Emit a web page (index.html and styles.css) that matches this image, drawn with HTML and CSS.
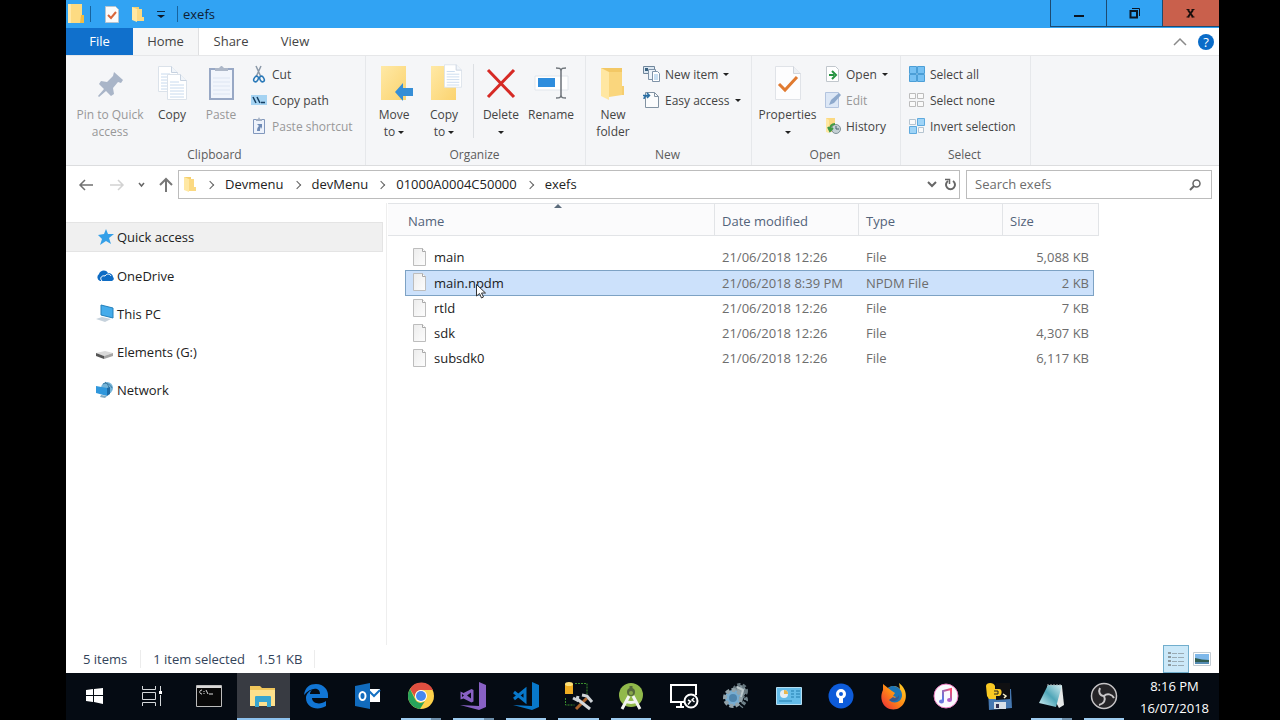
FILE: index.html
```html
<!DOCTYPE html>
<html lang="en">
<head>
    <meta charset="UTF-8">
    <meta name="viewport" content="width=device-width, initial-scale=1.0">
    <title>exefs</title>
    <link rel="stylesheet" href="styles.css">
</head>
<body>
    <svg class="defs" aria-hidden="true">
        <defs>
            <linearGradient id="gold" x1="0" y1="0" x2="1" y2="1"><stop offset="0" stop-color="#ffe9a6"/><stop offset="1" stop-color="#fbd36f"/></linearGradient>
            <linearGradient id="paper" x1="0" y1="0" x2="1" y2="1"><stop offset="0" stop-color="#ececec"/><stop offset="1" stop-color="#fdfdfd"/></linearGradient>
            <linearGradient id="fox" x1="1" y1="0" x2="0" y2="1"><stop offset="0" stop-color="#ffd928"/><stop offset="0.5" stop-color="#ff8a16"/><stop offset="1" stop-color="#e8253c"/></linearGradient>
            <linearGradient id="note" x1="1" y1="0" x2="0" y2="1"><stop offset="0" stop-color="#fc4a6c"/><stop offset="1" stop-color="#4c7df0"/></linearGradient>
            <linearGradient id="pad" x1="0" y1="1" x2="1" y2="0"><stop offset="0" stop-color="#d8f3f7"/><stop offset="0.5" stop-color="#4fa6b8"/><stop offset="1" stop-color="#d6eff3"/></linearGradient>
        </defs>
        <symbol id="folder" viewBox="0 0 14 17">
            <path d="M1 1h7v13H1z" fill="#f6cf6d"/>
            <path d="M1 1l5 2v13l-5-2z" fill="#ffe8a3"/>
            <path d="M6 3h5v8h2v4H6z" fill="#fbd982"/>
        </symbol>
        <symbol id="file" viewBox="0 0 15 18">
            <path d="M1.500.500h9l3 3v14h-12z" fill="url(#paper)" stroke="#bdbdbd"/>
            <path d="M10.500.500v3h3" fill="#fff" stroke="#a8a8a8"/>
        </symbol>
        <symbol id="page" viewBox="0 0 20 26">
            <path d="M.500.500h13l6 6v19H.500z" fill="#fff" stroke="#dbe2ea"/>
            <path d="M13.500.500v6h6" fill="#f1f5fa" stroke="#c7d2e0"/>
            <path d="M3 8h9M3 11h14M3 14h14M3 17h14M3 20h14M3 23h14" stroke="#c8daee"/>
        </symbol>
    </svg>

    <div class="desktop">
        <header class="titlebar">
            <svg class="app-icon" width="18" height="20" viewBox="0 0 18 20"><path d="M1 0h14v19H1z" fill="#fddb82"/><path d="M1 0h3v19H1z" fill="#ffe9a9"/><path d="M14 11h3v8h-4z" fill="#f1bd45"/></svg>
            <span class="divider"></span>
            <div class="quick-tools">
                <button aria-label="Properties"><svg width="14" height="17" viewBox="0 0 14 17"><path d="M.500.500h10l3 3v13H.500z" fill="#fbfbfb" stroke="#b9c5d0"/><path d="M3 9l3 3 5-6" fill="none" stroke="#d9663a" stroke-width="2"/></svg></button>
                <button aria-label="New folder"><svg width="14" height="17"><use href="#folder"/></svg></button>
                <button aria-label="Customize Quick Access Toolbar"><svg width="8" height="8" viewBox="0 0 8 8"><path d="M0 1.500h8" stroke="#0d2a47"/><path d="M0 5h8L4 8z" fill="#0d1726"/></svg></button>
            </div>
            <span class="divider"></span>
            <h1>exefs</h1>
            <div class="window-buttons">
                <button aria-label="Minimize"><svg width="12" height="12" viewBox="0 0 12 12"><path d="M1 9h10" stroke="#0b1522" stroke-width="2"/></svg></button>
                <button aria-label="Restore"><svg width="12" height="12" viewBox="0 0 12 12"><path d="M1.500 4h6.500v6.500H1.500z" fill="none" stroke="#0b1522" stroke-width="2"/><path d="M3 1.500h7.500V9" fill="none" stroke="#0b1522"/></svg></button>
                <button class="close" aria-label="Close"><svg width="12" height="12" viewBox="0 0 12 12"><path d="M3 3l5 7M8 3l-5 7" stroke="#1a0f0d" stroke-width="2"/><path d="M1.500 2.500h3M6.500 2.500h3M1.500 10h3M6.500 10h3" stroke="#1a0f0d"/></svg></button>
            </div>
        </header>

        <nav class="tabs">
            <button class="tab file">File</button>
            <button class="tab active">Home</button>
            <button class="tab">Share</button>
            <button class="tab">View</button>
            <div class="tab-tools">
                <button aria-label="Collapse ribbon"><svg width="14" height="9" viewBox="0 0 14 9"><path d="M1 8l6-6 6 6" fill="none" stroke="#8a8a8a" stroke-width="1.500"/></svg></button>
                <button class="help" aria-label="Help">?</button>
            </div>
        </nav>

        <section class="ribbon">
            <div class="group clipboard">
                <div class="group-body">
                    <button class="big pin" disabled>
                        <svg width="36" height="36" viewBox="0 0 36 36"><path d="M22 6l9 8-2 3-3-1-5 6 1 6-3 2-5-5-7 6-1-1 6-7-5-5 2-3 6 1 6-6z" fill="#a9b5c8"/></svg>
                        Pin to Quick<br>access
                    </button>
                    <button class="big copy">
                        <svg width="36" height="36" viewBox="0 0 36 36"><use href="#page" x="4" y="0" width="20" height="26"/><use href="#page" x="13" y="8" width="20" height="26"/></svg>
                        Copy
                    </button>
                    <button class="big paste" disabled>
                        <svg width="36" height="36" viewBox="0 0 36 36"><path d="M7 3h23v30H7z" fill="#f1f5fc" stroke="#98a8c5" stroke-width="2"/><path d="M10 12h17M10 16h17M10 20h17M10 24h17M10 28h17" stroke="#dde5f2"/><path d="M12 5V2h4l2-2h1l2 2h4v3z" fill="#aeb8c8"/></svg>
                        Paste
                    </button>
                    <div class="stack">
                        <button class="small">
                            <svg width="16" height="18" viewBox="0 0 16 18"><path d="M5 1l5 11M10 1L5 12" stroke="#8b99a8" stroke-width="1.500"/><ellipse cx="5" cy="14" rx="2" ry="3" transform="rotate(30 5 14)" fill="none" stroke="#2878b8" stroke-width="1.500"/><ellipse cx="11" cy="14" rx="2" ry="3" transform="rotate(-30 11 14)" fill="none" stroke="#2878b8" stroke-width="1.500"/></svg>
                            Cut
                        </button>
                        <button class="small">
                            <svg width="16" height="18" viewBox="0 0 16 18"><path d="M0 4h16v10H0z" fill="#a5d3f2"/><path d="M2 6l3 6M6 6l3 6M10 11.500h4" stroke="#153e62" stroke-width="1.500"/></svg>
                            Copy path
                        </button>
                        <button class="small" disabled>
                            <svg width="16" height="18" viewBox="0 0 16 18"><path d="M2.500 2.500h11v14h-11z" fill="#edf2fb" stroke="#8298bd"/><path d="M5 4V2h2l1-2 1 2h2v2z" fill="#a3b0c4"/><path d="M6 14c0-3 1-4 2-5L6 7h5v5l-1-2c-1 1-1 2-1 4z" fill="#6f8bb6"/></svg>
                            Paste shortcut
                        </button>
                    </div>
                </div>
                <h2>Clipboard</h2>
            </div>

            <div class="group organize">
                <div class="group-body">
                    <button class="big">
                        <svg width="36" height="36" viewBox="0 0 36 36"><path d="M5 0h25v34H5z" fill="url(#gold)"/><path d="M19 26l8-9v5h10v8H27v5z" fill="#368ed6"/></svg>
                        Move<br>to <span class="caret"></span>
                    </button>
                    <button class="big">
                        <svg width="36" height="36" viewBox="0 0 36 36"><path d="M5 0h25v34H5z" fill="url(#gold)"/><use href="#page" x="18" y="-2" width="18" height="24"/></svg>
                        Copy<br>to <span class="caret"></span>
                    </button>
                    <span class="rule"></span>
                    <button class="big delete">
                        <svg width="36" height="36" viewBox="0 0 36 36"><path d="M5 4l26 27M31 4L5 31" stroke="#d62a25" stroke-width="3"/></svg>
                        Delete<br><span class="caret"></span>
                    </button>
                    <button class="big">
                        <svg width="36" height="36" viewBox="0 0 36 36"><path d="M2 10h33v14H2z" fill="#fff" stroke="#e2e6eb"/><path d="M5 12h17v9H5z" fill="#2e8ddd"/><path d="M23 2c3 0 5 0 5 3 0-3 2-3 5-3M28 5v24M23 32c3 0 5 0 5-3 0 3 2 3 5 3" fill="none" stroke="#6d7379" stroke-width="1.500"/></svg>
                        Rename
                    </button>
                </div>
                <h2>Organize</h2>
            </div>

            <div class="group new">
                <div class="group-body">
                    <button class="big">
                        <svg width="36" height="36" viewBox="0 0 36 36"><path d="M6 2h21v27H6z" fill="#f3c865"/><path d="M27 20h2v9h-5z" fill="#f6ce70"/><path d="M6 2l8 4v28l-8-4z" fill="#ffe7a2"/><path d="M14 6h13v23l-13 2z" fill="#fad67d"/></svg>
                        New<br>folder
                    </button>
                    <div class="stack">
                        <button class="small">
                            <svg width="17" height="18" viewBox="0 0 17 18"><path d="M.500 1.500h11v7H.500z" fill="#dbe7f2" stroke="#70869b"/><path d="M2 3h3v3H2z" fill="#39617f"/><path d="M5.500 4.500h7v10h-7z" fill="#eef4fa" stroke="#7f93a8"/><path d="M9.500 6.500h5l2 2v8h-7z" fill="#fff" stroke="#7f93a8"/><path d="M11 10h4M11 12h4M11 14h4" stroke="#8fbce2"/></svg>
                            New item <span class="caret"></span>
                        </button>
                        <button class="small">
                            <svg width="17" height="18" viewBox="0 0 17 18"><path d="M2.500 1.500h9l4 4v11h-13z" fill="#fbfcfd" stroke="#8293a3"/><path d="M11.500 1.500v4h4" fill="none" stroke="#8293a3"/><path d="M0 4.500h6M1 8c0-2 1-3 4-3.500M4 2l2.500 2.500L4 7" fill="none" stroke="#2a6ea3" stroke-width="1.500"/></svg>
                            Easy access <span class="caret"></span>
                        </button>
                    </div>
                </div>
                <h2>New</h2>
            </div>

            <div class="group open">
                <div class="group-body">
                    <button class="big properties">
                        <svg width="36" height="36" viewBox="0 0 36 36"><path d="M5.500.500h18l7 7v26h-25z" fill="#fdfdfe" stroke="#e0e3e8"/><path d="M23.500.500v7h7" fill="#edf0f4" stroke="#d0d5dc"/><path d="M9 18l6 6 12-13" fill="none" stroke="#e07a30" stroke-width="3"/></svg>
                        Properties<br><span class="caret"></span>
                    </button>
                    <div class="stack">
                        <button class="small">
                            <svg width="16" height="18" viewBox="0 0 16 18"><path d="M1.500 1.500h9l3 3v12h-12z" fill="#fff" stroke="#c1c7cd"/><path d="M4 10h5M7 6l4 4-4 4" fill="none" stroke="#259340" stroke-width="2"/></svg>
                            Open <span class="caret"></span>
                        </button>
                        <button class="small" disabled>
                            <svg width="16" height="18" viewBox="0 0 16 18"><path d="M.500 1.500h13v15H.500z" fill="#dce7f6" stroke="#b3c4df"/><path d="M4 14l2-5 8-7 2 2-7 8z" fill="#8ea9cc"/></svg>
                            Edit
                        </button>
                        <button class="small">
                            <svg width="16" height="18" viewBox="0 0 16 18"><path d="M1 1h9v14H1z" fill="#fbd982"/><path d="M1 1l3 2v13l-3-1z" fill="#ffe8a3"/><circle cx="11" cy="12" r="4.500" fill="#c5d1d5" stroke="#7f9298"/><path d="M11 9v3h3" fill="none" stroke="#43606c"/><path d="M5 13c0-4 2-6 5-6M3 10l2 4 3-3" fill="none" stroke="#3f9a45" stroke-width="2"/></svg>
                            History
                        </button>
                    </div>
                </div>
                <h2>Open</h2>
            </div>

            <div class="group select">
                <div class="group-body">
                    <div class="stack">
                        <button class="small">
                            <svg width="16" height="18" viewBox="0 0 16 18"><path d="M.500 1.500h7v7h-7zM8.500 1.500h7v7h-7zM.500 9.500h7v7h-7zM8.500 9.500h7v7h-7z" fill="#77c1f3" stroke="#4c9fd7"/></svg>
                            Select all
                        </button>
                        <button class="small">
                            <svg width="16" height="18" viewBox="0 0 16 18"><path d="M.500 2.500h6v5h-6zM8.500 2.500h6v5h-6zM.500 10.500h6v5h-6zM8.500 10.500h6v5h-6z" fill="#fafafa" stroke="#bcbcbc"/></svg>
                            Select none
                        </button>
                        <button class="small">
                            <svg width="16" height="18" viewBox="0 0 16 18"><path d="M.500 2.500h6v5h-6zM9.500 10.500h5v5h-5z" fill="#fafafa" stroke="#b5c4d0"/><path d="M8.500 1.500h7v7h-7zM.500 9.500h7v7h-7z" fill="#9fd4f7" stroke="#5faade"/></svg>
                            Invert selection
                        </button>
                    </div>
                </div>
                <h2>Select</h2>
            </div>
        </section>

        <div class="location">
            <div class="arrows">
                <button aria-label="Back"><svg width="14" height="12" viewBox="0 0 14 12"><path d="M14 6H2M6 1L1 6l5 5" fill="none" stroke="#707070" stroke-width="1.500"/></svg></button>
                <button aria-label="Forward" disabled><svg width="14" height="12" viewBox="0 0 14 12"><path d="M0 6h12M8 1l5 5-5 5" fill="none" stroke="#d2d2d2" stroke-width="1.500"/></svg></button>
                <button aria-label="Recent locations"><svg width="7" height="5" viewBox="0 0 7 5"><path d="M1 1l2.500 3L6 1" fill="none" stroke="#666" stroke-width="1.500"/></svg></button>
                <button aria-label="Up"><svg width="14" height="14" viewBox="0 0 14 14"><path d="M7 14V2M1 7l6-6 6 6" fill="none" stroke="#777" stroke-width="2"/></svg></button>
            </div>
            <div class="address">
                <svg class="address-icon" width="14" height="17"><use href="#folder"/></svg>
                <ol class="crumbs">
                    <li><a href="#">Devmenu</a></li>
                    <li><a href="#">devMenu</a></li>
                    <li><a href="#">01000A0004C50000</a></li>
                    <li><a href="#">exefs</a></li>
                </ol>
                <button aria-label="Previous locations"><svg width="10" height="7" viewBox="0 0 10 7"><path d="M1 1l4 4 4-4" fill="none" stroke="#666" stroke-width="2"/></svg></button>
                <button aria-label="Refresh"><svg width="12" height="13" viewBox="0 0 12 13"><path d="M8 3a4.500 4.500 0 1 1-5 0" fill="none" stroke="#666" stroke-width="2"/><path d="M0 1.500h4.500v4.500" fill="none" stroke="#666" stroke-width="1.500"/></svg></button>
            </div>
            <label class="search">
                <input type="text" placeholder="Search exefs" aria-label="Search exefs">
                <svg width="12" height="12" viewBox="0 0 12 12"><circle cx="7.500" cy="4.500" r="3.500" fill="none" stroke="#666" stroke-width="1.500"/><path d="M5 7l-4 4" stroke="#666" stroke-width="2"/></svg>
            </label>
        </div>

        <main class="content">
            <nav class="sidebar">
                <a class="current" href="#"><svg width="18" height="18" viewBox="0 0 18 18"><path d="M10 1l2 5 6 0-5 4 2 6-5-3-6 4 2-6-4-4 6-1z" fill="#35a0e8"/></svg>Quick access</a>
                <a href="#"><svg width="18" height="18" viewBox="0 0 18 18"><path d="M4 14a4 4 0 0 1-1-7c1-4 7-5 9-1 3 0 5 2 5 4 2 2 0 4-2 4z" fill="#0f6cc4"/><path d="M6 14c-3-3 0-6 3-5 2-3 5-2 6 0" fill="none" stroke="#fff"/></svg>OneDrive</a>
                <a href="#"><svg width="18" height="18" viewBox="0 0 18 18"><path d="M5 0l12 3v10L5 10z" fill="#45aceb" stroke="#2480bb"/><path d="M0 14l6-2 9 2-6 3z" fill="#c6d2dc"/></svg>This PC</a>
                <a href="#"><svg width="18" height="18" viewBox="0 0 18 18"><path d="M0 10l9-2 8 2-9 3z" fill="#dadada"/><path d="M0 10l8 3v3l-8-3z" fill="#555"/><path d="M8 13l9-3v3l-9 3z" fill="#a5a5a5"/></svg>Elements (G:)</a>
                <a href="#"><svg width="18" height="18" viewBox="0 0 18 18"><circle cx="11" cy="7" r="6" fill="#75b4d8"/><path d="M7 3c3-2 8 1 9 4M9 1c4 3 5 7 4 12" fill="none" stroke="#3e7ba1"/><path d="M0 5l11 2v8L0 12z" fill="#2f97dc"/><path d="M11 7l3-1v7l-3 2z" fill="#1d6ba6"/><path d="M5 14l6 1-2 2-5-1z" fill="#7fa9c1"/></svg>Network</a>
            </nav>
            <section class="files">
                <table>
                    <thead>
                        <tr>
                            <th class="name">Name<span class="sort"></span></th>
                            <th class="date">Date modified</th>
                            <th class="type">Type</th>
                            <th class="size">Size</th>
                        </tr>
                    </thead>
                    <tbody>
                        <tr><td><svg width="15" height="18"><use href="#file"/></svg>main</td><td>21/06/2018 12:26</td><td>File</td><td>5,088 KB</td></tr>
                        <tr class="selected"><td><svg width="15" height="18"><use href="#file"/></svg>main.npdm<svg class="pointer" width="10" height="15" viewBox="0 0 10 15"><path d="M.500.500v11.500l3-2.500 2 4.500 2-1-2-4h4z" fill="#fff" stroke="#333"/></svg></td><td>21/06/2018 8:39 PM</td><td>NPDM File</td><td>2 KB</td></tr>
                        <tr><td><svg width="15" height="18"><use href="#file"/></svg>rtld</td><td>21/06/2018 12:26</td><td>File</td><td>7 KB</td></tr>
                        <tr><td><svg width="15" height="18"><use href="#file"/></svg>sdk</td><td>21/06/2018 12:26</td><td>File</td><td>4,307 KB</td></tr>
                        <tr><td><svg width="15" height="18"><use href="#file"/></svg>subsdk0</td><td>21/06/2018 12:26</td><td>File</td><td>6,117 KB</td></tr>
                    </tbody>
                </table>
            </section>
        </main>

        <div class="status">
            <span class="count">5 items</span>
            <span class="selection"><span>1 item selected</span><span>1.51 KB</span></span>
            <div class="views">
                <button class="on" aria-label="Details"><svg width="18" height="18" viewBox="0 0 18 18"><path d="M1 3h3M1 7h3M1 11h3M1 15h3" stroke="#8d999f" stroke-width="2"/><path d="M5 3.500h5M11 3.500h6M5 7.500h5M11 7.500h6M5 11.500h5M11 11.500h6M5 15.500h5M11 15.500h6" stroke="#9aabb4"/></svg></button>
                <button aria-label="Large icons"><svg width="18" height="14" viewBox="0 0 18 14"><path d="M.500.500h17v13H.500z" fill="#fff" stroke="#c3ccd3"/><path d="M2 2h14v6H2z" fill="#7eb8ea"/><path d="M2 6c5 1 9 2 14 2v2H2z" fill="#315d52"/><path d="M2 10h14v2H2z" fill="#558cb4"/></svg></button>
            </div>
        </div>

        <footer class="taskbar">
            <div class="system">
                <button aria-label="Start"><svg width="18" height="18" viewBox="0 0 18 18"><path d="M0 3l7-1v6H0zM8 2l9-1v7H8zM0 9h7v6l-7-1zM8 9h9v8l-9-2z" fill="#fff"/></svg></button>
                <button aria-label="Task view"><svg width="22" height="20" viewBox="0 0 22 20"><path d="M1.500 0v3.500h13V0M1.500 6.500h13v7h-13zM1.500 20v-3.500h13V20M19.500 0v5M19.500 9v11" fill="none" stroke="#d5d8da"/><path d="M18 5h3v3h-3z" fill="#fff"/></svg></button>
                <button aria-label="Command Prompt"><svg width="26" height="22" viewBox="0 0 26 22"><path d="M.500.500h25v21H.500z" fill="#080808" stroke="#bcbcbc"/><path d="M1 1h24v2H1z" fill="#d9d9d9"/><path d="M6 5c-3 0-3 4 0 4M8 6v1M8 8v1M10 5l2 4M13 9h4" fill="none" stroke="#ddd"/></svg></button>
            </div>
            <div class="apps">
                <button class="current" aria-label="File Explorer"><svg width="28" height="24" viewBox="0 0 28 24"><path d="M1 2h10l2 2h13v18H1z" fill="#f0c65b"/><path d="M1 6h25v16H1z" fill="#fde08c"/><path d="M6 23V13c0-1 1-1 1-1h14c1 0 1 1 1 1v10h-4v-5h-8v5z" fill="#38a5cf"/></svg></button>
                <button aria-label="Edge"><svg width="26" height="26" viewBox="0 0 26 26"><path d="M1 12C2 4 7 1 13 1c8 0 12 6 12 11v3H9c0 6 9 7 14 3v5c-8 5-20 2-20-8 0-4 3-7 6-8-2 2-2 3-2 4h10c0-7-9-7-16 1z" fill="#1175d4"/></svg></button>
                <button aria-label="Outlook"><svg width="26" height="26" viewBox="0 0 26 26"><path d="M13 6h12v13H13z" fill="#fff"/><path d="M14 8l5 5 6-6" fill="none" stroke="#1470c2" stroke-width="2"/><path d="M0 3l15-3v26L0 23z" fill="#116bbd"/><ellipse cx="7.500" cy="13" rx="3" ry="4" fill="none" stroke="#fff" stroke-width="2"/></svg></button>
                <button class="running multi" aria-label="Chrome"><svg width="28" height="28" viewBox="0 0 28 28"><circle cx="14" cy="14" r="13" fill="#fdd14a"/><path d="M3 7a13 13 0 0 1 23 1H14a6 6 0 0 0-6 7z" fill="#df4f40"/><path d="M3 7l5 10a6 6 0 0 0 10 2l-5 8A13 13 0 0 1 3 7z" fill="#27a35b"/><circle cx="14" cy="14" r="6" fill="#fff"/><circle cx="14" cy="14" r="5" fill="#4688ee"/></svg></button>
                <button class="running multi" aria-label="Visual Studio"><svg width="28" height="28" viewBox="0 0 28 28"><path d="M20 0l7 3v22l-7 3L1 23l19 1z" fill="#8861c4"/><path d="M1.500 9.500v8l3-1 8 4 2-1V8l-2-1-8 4z" fill="#8861c4"/><path d="M3 12v3l2-1.500zM8 13.500l4-3v6z" fill="#050b13"/></svg></button>
                <button class="running" aria-label="Visual Studio Code"><svg width="28" height="28" viewBox="0 0 28 28"><path d="M20 0l7 3v22l-7 3L1 23l19 1z" fill="#0878ca"/><path d="M2 10l11 9V8L2 17" fill="none" stroke="#0878ca" stroke-width="3"/></svg></button>
                <button class="running" aria-label="Resource tools"><svg width="28" height="28" viewBox="0 0 28 28"><path d="M11 1.500h12V12M1.500 16v7h9" fill="none" stroke="#3a8c2d" stroke-dasharray="2 1"/><path d="M1 2h8v10H1z" fill="#efad22"/><ellipse cx="5" cy="2" rx="4" ry="2" fill="#ffe078"/><path d="M12 27l11-11" stroke="#aa632c" stroke-width="3"/><path d="M12 16l14 11" stroke="#d5d9dc" stroke-width="3"/><path d="M18 13l5 1 5 6M9 16l4 2 1-4" fill="none" stroke="#cdd2d6" stroke-width="3"/></svg></button>
                <button class="running" aria-label="Android Studio"><svg width="28" height="28" viewBox="0 0 28 28"><circle cx="14" cy="13" r="12" fill="#91b94b"/><circle cx="14" cy="10" r="4" fill="#56683d"/><path d="M14 4v5" stroke="#56683d" stroke-width="3"/><path d="M12 14L5 27M16 14l7 13M8 19c4 2 8 2 12 0" fill="none" stroke="#f2f4f1" stroke-width="3"/><circle cx="14" cy="11" r="2" fill="#87a849"/></svg></button>
                <button aria-label="Remote Desktop"><svg width="30" height="26" viewBox="0 0 30 26"><path d="M18 19H2V2h25v10M7 24h8M12 19v5" fill="none" stroke="#fff" stroke-width="2"/><circle cx="22" cy="18" r="6.500" fill="#081018" stroke="#fff" stroke-width="2"/><path d="M19 17l2.500 1.500-2.500 3M25 15l-2 2 2.500 2" fill="none" stroke="#fff" stroke-width="1.500"/></svg></button>
                <button aria-label="Services"><svg width="28" height="28" viewBox="0 0 28 28"><circle cx="18" cy="9" r="6" fill="#8a9ba3" stroke="#67777f" stroke-width="4" stroke-dasharray="3 2"/><circle cx="11" cy="16" r="8" fill="#76acd1" stroke="#93a3aa" stroke-width="4" stroke-dasharray="4 2"/><path d="M19 13a5 5 0 0 1 5 5l-5 7" fill="none" stroke="#6f828a" stroke-width="4" stroke-dasharray="3 2"/><circle cx="11" cy="16" r="4" fill="#4f85ad"/><path d="M15 5l6 3-2 7" fill="none" stroke="#bcc8cc" stroke-width="2"/></svg></button>
                <button aria-label="Control Panel"><svg width="26" height="20" viewBox="0 0 26 20"><path d="M.500 1.500h25v17H.500z" fill="#64bce9" stroke="#b5dff3"/><circle cx="8" cy="8" r="4" fill="#e6eef2"/><path d="M8 8V4a4 4 0 0 1 4 4z" fill="#e9b84f"/><path d="M15 5h3M20 5h4M15 8h3M20 8h4M15 11h3M20 11h4M3 15h13" stroke="#237eaf"/></svg></button>
                <button aria-label="Sourcetree"><svg width="26" height="26" viewBox="0 0 26 26"><circle cx="13" cy="13" r="12.500" fill="#0d5bd9"/><circle cx="13" cy="11" r="3.500" fill="none" stroke="#fff" stroke-width="3"/><path d="M11 14h4v6h-4z" fill="#fff"/></svg></button>
                <button aria-label="Firefox"><svg width="28" height="28" viewBox="0 0 28 28"><path d="M3 8V2l5 4c6-4 10-1 12 1l-1-6c10 7 9 22-2 26C5 30-2 18 3 8z" fill="url(#fox)"/><path d="M8 6c6-5 14 0 14 7s-8 10-13 5c4 0 6-1 7-3l-3-1 2-3-3-2z" fill="#1d75b6"/><path d="M13 15c3 2 5 0 6-2 1 5-5 8-10 5z" fill="#39578c"/></svg></button>
                <button aria-label="iTunes"><svg width="26" height="26" viewBox="0 0 26 26"><circle cx="13" cy="13" r="12" fill="#fafafe" stroke="#e979bd"/><path d="M10 18V8l8-2v11" fill="none" stroke="url(#note)" stroke-width="2"/><ellipse cx="8.500" cy="18.500" rx="2.500" ry="2" fill="#6c79dc"/><ellipse cx="16.500" cy="17" rx="2.500" ry="2" fill="#b05ecb"/></svg></button>
                <button aria-label="Python"><svg width="28" height="28" viewBox="0 0 28 28"><path d="M3 7h23l1 19-23 2z" fill="#4678b0"/><path d="M11 1h14v16l-14 1z" fill="#101012"/><path d="M9 20h12v7H9z" fill="#d9e0e7"/><path d="M11 22h3v4h-3z" fill="#335"/><path d="M1 4c0-4 8-4 9 0v3h4c4 0 3 7 0 7h-3v3H4l-2-3z" fill="#f9c923"/><path d="M9 9h4v3H9" fill="none" stroke="#222"/><path d="M18 12l3 2-2 2" fill="none" stroke="#fff8d0" stroke-width="1.500"/></svg></button>
                <button class="running multi" aria-label="Notepad"><svg width="28" height="28" viewBox="0 0 28 28"><path d="M10 4h15l2 19-5 3z" fill="#e5e8e8"/><path d="M11 3h14l-6 22-17-4z" fill="url(#pad)"/><path d="M11 2v2M14 2v2M17 2v2M20 2v2M23 2v2" stroke="#adb4b6"/></svg></button>
                <button class="running" aria-label="OBS Studio"><svg width="28" height="28" viewBox="0 0 28 28"><circle cx="14" cy="14" r="12.500" fill="#252427" stroke="#c6c4c6" stroke-width="1.500"/><path d="M14 14c-4 0-6-4-4-8M14 14c3-3 8-2 10 2M14 14c2 4 0 8-5 9" fill="none" stroke="#c8c6c8" stroke-width="2"/></svg></button>
            </div>
            <div class="clock">
                <span>8:16 PM</span>
                <span>16/07/2018</span>
            </div>
        </footer>
    </div>
</body>
</html>
```
FILE: styles.css
```css
* {
    box-sizing: border-box;
}

body {
    font-family: "Open Sans", "Noto Sans", sans-serif;
    font-size: 13px;
    line-height: 17px;
    margin: 0;
    padding: 0 61px 0 66px;
    background-color: #000;
    color: #222;
}

button {
    font: inherit;
    color: inherit;
    background: none;
    border: none;
    padding: 0;
}

svg {
    flex-shrink: 0;
    overflow: visible;
}

a {
    color: inherit;
    text-decoration: none;
}

.defs {
    position: absolute;
    width: 0;
    height: 0;
}

.desktop {
    display: flex;
    flex-direction: column;
    min-height: 100vh;
    background-color: #fff;
}

/* title bar */
.titlebar {
    display: flex;
    align-items: center;
    height: 28px;
    padding-left: 1px;
    background-color: #31a3f3;
    color: #102033;
}

.titlebar h1 {
    font-size: 13px;
    font-weight: normal;
    margin: 0 0 0 5px;
}

.divider {
    width: 1px;
    height: 16px;
    margin-left: 5px;
    background-color: #17639e;
}

.quick-tools {
    display: flex;
    align-items: center;
    gap: 12px;
    padding: 0 7px 0 14px;
}

.quick-tools button {
    display: flex;
}

.window-buttons {
    display: flex;
    align-self: stretch;
    margin-left: auto;
    padding-bottom: 1px;
}

.window-buttons button {
    display: flex;
    align-items: center;
    justify-content: center;
    width: 56px;
    border: 1px solid #1d4a70;
    border-width: 0 0 1px 1px;
}

.window-buttons .close {
    background-color: #c9604c;
    width: 57px;
}

/* ribbon tabs */
.tabs {
    display: flex;
    height: 27px;
    color: #444;
}

.tab {
    width: 64px;
}

.tab.file {
    width: 67px;
    background-color: #1070cc;
    color: #fff;
}

.tab.active {
    width: 66px;
    background-color: #f5f6f7;
    border-right: 1px solid #dfe0e2;
}

.tab-tools {
    display: flex;
    align-items: center;
    gap: 11px;
    margin-left: auto;
    padding-right: 5px;
}

.help {
    width: 16px;
    height: 16px;
    border-radius: 50%;
    background-color: #0a6cc8;
    color: #fff;
    line-height: 16px;
}

/* ribbon */
.ribbon {
    display: flex;
    height: 111px;
    background-color: #f5f6f8;
    border-top: 1px solid #e6e7e9;
    border-bottom: 1px solid #dcdddf;
    color: #444;
}

.group {
    display: flex;
    flex-direction: column;
    border-right: 1px solid #e6e8eb;
}

.group h2 {
    margin: 0;
    padding-right: 2px;
    font-size: 12px;
    line-height: 20px;
    font-weight: normal;
    text-align: center;
    color: #5c5c5c;
}

.group-body {
    display: flex;
    flex: 1;
    padding-top: 5px;
}

.clipboard {
    width: 300px;
}

.organize {
    width: 220px;
}

.new {
    width: 166px;
}

.open {
    width: 149px;
}

.select {
    width: 130px;
}

.big {
    display: block;
    width: 50px;
    padding-top: 5px;
    font-size: 12px;
    text-align: center;
    white-space: nowrap;
    align-self: flex-start;
}

.big svg {
    display: block;
    margin: 0 auto 4px;
}

.pin {
    width: 88px;
}

.copy {
    width: 36px;
}

.paste {
    width: 62px;
}

.properties {
    width: 71px;
}

.organize .group-body {
    padding-left: 3px;
}

.new .group-body {
    padding-left: 2px;
}

.delete {
    margin-left: 2px;
}

.rule {
    width: 1px;
    height: 74px;
    margin: 3px 0 0 4px;
    background-color: #dcdfe3;
}

.ribbon button:disabled {
    color: #989898;
}

.stack {
    display: flex;
    flex-direction: column;
    align-items: flex-start;
}

.small {
    display: flex;
    align-items: center;
    gap: 5px;
    height: 26px;
    font-size: 12px;
    white-space: nowrap;
}

.clipboard .stack {
    margin-left: -1px;
}

.new .stack {
    padding-left: 5px;
}

.open .stack {
    padding-left: 2px;
}

.select .stack {
    padding-left: 8px;
}

.caret {
    display: inline-block;
    border: 3px solid transparent;
    border-top-color: #222;
    border-bottom: none;
    vertical-align: middle;
}

/* address row */
.location {
    display: flex;
    gap: 6px;
    padding: 4px 7px 4px 13px;
    height: 37px;
}

.arrows {
    display: flex;
    align-items: center;
    gap: 17px;
    width: 94px;
}

.arrows button {
    display: flex;
}

.arrows button:nth-child(n+3) {
    margin-left: -3px;
}

.address {
    display: flex;
    align-items: center;
    flex: 1;
    gap: 8px;
    margin-left: -1px;
    padding: 0 2px 0 4px;
    border: 1px solid #bcbcbc;
}

.crumbs {
    display: flex;
    flex: 1;
    list-style: none;
    margin: 0;
    padding: 0;
}

.crumbs li {
    display: flex;
    align-items: center;
}

.crumbs li::before {
    content: "";
    width: 5px;
    height: 5px;
    margin: 0 12px 0 10px;
    border: solid #606060;
    border-width: 1px 1px 0 0;
    transform: rotate(45deg);
}

.crumbs li:first-child::before {
    margin-left: 2px;
}

.address button {
    display: flex;
}

.search {
    display: flex;
    align-items: center;
    width: 246px;
    padding: 0 10px 0 8px;
    border: 1px solid #bcbcbc;
}

.search input {
    flex: 1;
    min-width: 0;
    padding: 0;
    border: none;
    outline: none;
    font: inherit;
}

.search input::placeholder {
    color: #6d6d6d;
}

/* content */
.content {
    display: flex;
    flex: 1;
}

.sidebar {
    display: flex;
    flex-direction: column;
    gap: 10px;
    width: 321px;
    padding: 19px 3px 0 0;
    border-right: 1px solid #eee;
}

.sidebar a {
    display: flex;
    align-items: center;
    gap: 3px;
    height: 28px;
    padding-left: 30px;
}

.sidebar .current {
    height: 30px;
    background-color: #f0f0f0;
    border: 1px solid #e4e4e4;
    border-left: none;
}

.files {
    flex: 1;
    padding-left: 1px;
}

.files table {
    table-layout: fixed;
    width: 711px;
    border-collapse: separate;
    border-spacing: 0;
}

.files th {
    position: relative;
    height: 33px;
    padding: 3px 0 0 7px;
    background-color: #fbfbfc;
    border: 1px solid #e2e4e7;
    border-left: none;
    font-weight: normal;
    text-align: left;
    color: #53637a;
}

.files .name {
    width: 327px;
    padding-left: 20px;
}

.files .date,
.files .type {
    width: 144px;
}

.sort {
    position: absolute;
    top: 0;
    left: 51%;
    border: 4px solid transparent;
    border-bottom-color: #5c6c7c;
    border-top: none;
}

.files tbody::before {
    content: "";
    display: block;
    height: 9px;
}

.files td {
    position: relative;
    height: 25px;
    padding: 0 0 0 7px;
    color: #6d6d6d;
    background-clip: padding-box;
}

.files td:first-child {
    border-left: 17px solid #fff;
    color: #1b1b1b;
}

.files td:first-child svg {
    vertical-align: middle;
    margin: -4px 7px 0 0;
}

.files td:last-child {
    border-right: 5px solid #fff;
    padding-right: 5px;
    text-align: right;
}

.files .selected td {
    height: 26px;
    background-color: #cce1fb;
    box-shadow: inset 0 1px #7da2c4, inset 0 -1px #7da2c4;
}

.files .selected td:first-child {
    box-shadow: inset 1px 1px #7da2c4, inset 0 -1px #7da2c4;
}

.files .selected td:last-child {
    box-shadow: inset -1px 1px #7da2c4, inset 0 -1px #7da2c4;
}

.files td:first-child .pointer {
    position: absolute;
    top: 14px;
    left: 71px;
    margin: 0;
}

/* status bar */
.status {
    display: flex;
    align-items: center;
    height: 28px;
    padding: 0 8px 0 17px;
    color: #33435a;
}

.count,
.selection {
    padding-top: 1px;
    border-right: 1px solid #ececec;
}

.count {
    padding-right: 13px;
}

.selection {
    display: flex;
    gap: 12px;
    padding-left: 12px;
    padding-right: 12px;
}

.views {
    display: flex;
    align-self: stretch;
    gap: 4px;
    margin-left: auto;
}

.views button {
    display: flex;
    align-items: center;
}

.views .on {
    padding: 0 3px;
    background-color: #cbe8f8;
    border: 1px solid #71aecd;
}

/* taskbar */
.taskbar {
    display: flex;
    height: 47px;
    background-color: #050b13;
    color: #fff;
}

.system {
    display: flex;
    width: 171px;
}

.system button,
.apps button {
    display: flex;
    flex: 1;
    align-items: center;
    justify-content: center;
    border-bottom: 2px solid transparent;
}

.apps {
    display: flex;
    flex: 1;
}

.apps .current {
    background-color: #383b42;
    border-bottom-color: #8cc0ec;
}

.apps .running {
    position: relative;
}

.apps .running::after {
    content: "";
    position: absolute;
    bottom: -2px;
    left: 6px;
    right: 6px;
    height: 2px;
    background-color: #9dcbef;
}

.apps .multi::after {
    background-image: linear-gradient(to left, #6d8fab 10px, transparent 10px);
}

.clock {
    display: flex;
    flex-direction: column;
    justify-content: center;
    width: 89px;
    padding-top: 1px;
    font-size: 13px;
    line-height: 22px;
    text-align: center;
}
```
